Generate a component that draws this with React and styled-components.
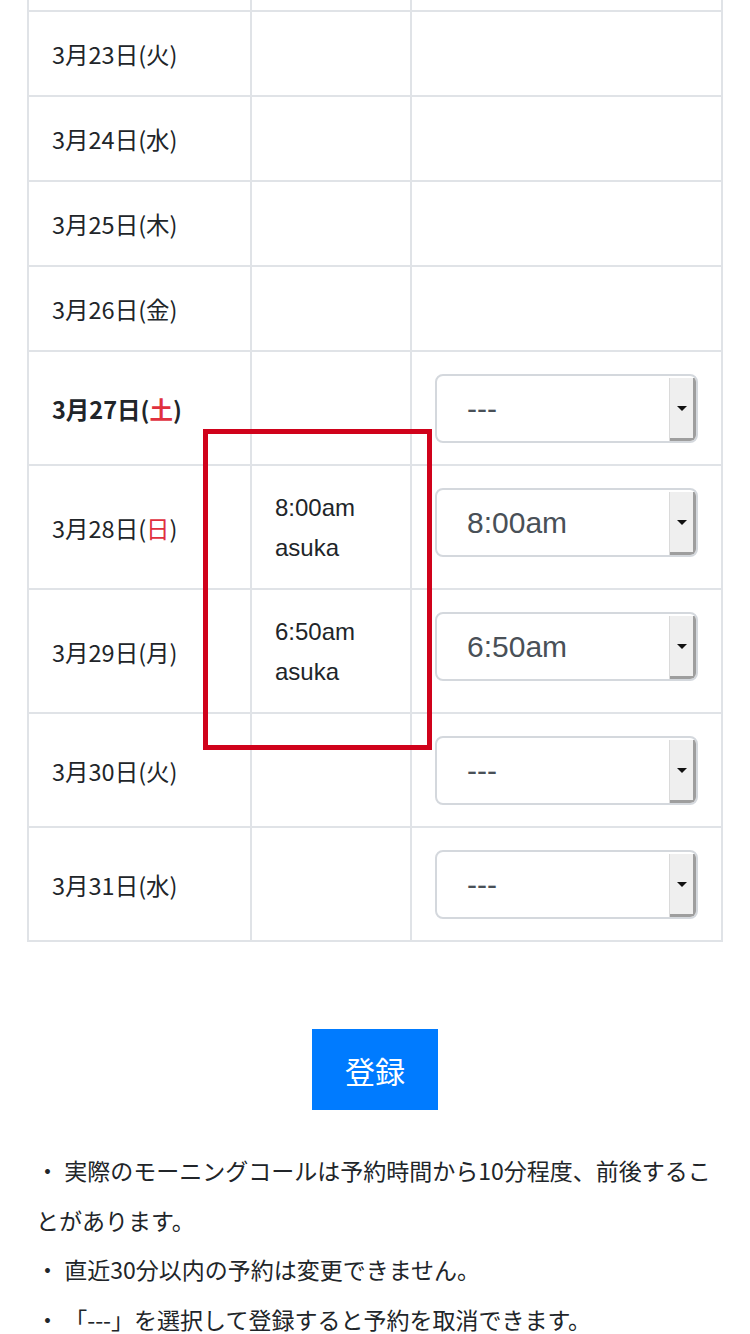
import React from "react";
import styled, { createGlobalStyle } from "styled-components";

const Global = createGlobalStyle`
  html, body { margin: 0; padding: 0; background: #fff; }
  body { font-family: "Noto Sans CJK JP", sans-serif; color: #212529; }
`;

const Page = styled.div`
  position: relative;
  display: flow-root;
  width: 750px;
  min-height: 1334px;
  overflow: hidden;
`;

const Table = styled.table`
  width: 696px;
  margin: -75px auto 0;
  border-collapse: collapse;
  table-layout: fixed;
`;

const Cell = styled.td`
  border: 2px solid #e0e3e7;
  padding: 22px 23px 21px;
  vertical-align: ${(p) => (p.$top ? "top" : "middle")};
  font-family: "Noto Sans CJK JP", sans-serif;
  font-size: 23.5px;
  line-height: 40px;
  color: #212529;
`;

const DateText = styled.span`
  font-weight: ${(p) => (p.$bold ? 700 : 400)};
`;

const Red = styled.span`
  color: #e0303e;
`;

const TimeText = styled.div`
  font-family: "Liberation Sans", "Noto Sans CJK JP", sans-serif;
  font-size: 24px;
  line-height: 39.5px;
  color: #212529;
`;

const SelectBox = styled.div`
  display: flex;
  height: 69px;
  box-sizing: border-box;
  border: 2px solid #d4d8dd;
  border-radius: 8px;
  overflow: hidden;
  background: #fff;
`;

const NativeSelect = styled.select`
  appearance: none;
  -webkit-appearance: none;
  flex: 1;
  min-width: 0;
  border: none;
  outline: none;
  background: transparent;
  padding: 0 0 0 30px;
  font-family: "Liberation Sans", sans-serif;
  font-size: 30px;
  color: #495057;
`;

const ArrowBox = styled.span`
  display: flex;
  align-items: center;
  justify-content: center;
  width: 27px;
  margin-top: 2px;
  background: #efefef;
  border-left: 1px solid #dadada;
  box-shadow: inset -3px -3px 0 #9e9e9e;
  padding: 0 3px 3px 0;
  box-sizing: border-box;
`;

const Triangle = styled.span`
  width: 0;
  height: 0;
  border-left: 5px solid transparent;
  border-right: 5px solid transparent;
  border-top: 5px solid #111;
`;

const Highlight = styled.div`
  position: absolute;
  left: 203px;
  top: 429px;
  width: 229px;
  height: 321px;
  box-sizing: border-box;
  border: 5px solid #d0021b;
  pointer-events: none;
`;

const ButtonRow = styled.div`
  display: flex;
  justify-content: center;
  margin-top: 87px;
`;

const SubmitButton = styled.button`
  width: 126px;
  height: 81px;
  border: none;
  border-radius: 0;
  background: #007bff;
  color: #fff;
  font-family: "Noto Sans CJK JP", sans-serif;
  font-size: 30px;
  padding: 0;
`;

const Notes = styled.div`
  width: 678px;
  margin: 36px auto 0;
  font-family: "Noto Sans CJK JP", sans-serif;
  font-size: 23px;
  line-height: 49.7px;
  color: #212529;
`;

const Note = styled.p`
  margin: 0;
`;

const times = ["---", "6:00am", "6:10am", "6:20am", "6:30am", "6:40am", "6:50am", "7:00am", "7:30am", "8:00am", "8:30am", "9:00am"];

function TimeSelect({ value }) {
  return (
    <SelectBox>
      <NativeSelect defaultValue={value}>
        {times.map((t) => (
          <option key={t} value={t}>{t}</option>
        ))}
      </NativeSelect>
      <ArrowBox>
        <Triangle />
      </ArrowBox>
    </SelectBox>
  );
}

/* first entry is the row scrolled out of view above the screen */
const rows = [
  { d: null },
  { d: "3月23日", w: "火" },
  { d: "3月24日", w: "水" },
  { d: "3月25日", w: "木" },
  { d: "3月26日", w: "金" },
  { d: "3月27日", w: "土", red: true, bold: true, sel: "---" },
  { d: "3月28日", w: "日", red: true, time: "8:00am", who: "asuka", sel: "8:00am" },
  { d: "3月29日", w: "月", time: "6:50am", who: "asuka", sel: "6:50am" },
  { d: "3月30日", w: "火", sel: "---" },
  { d: "3月31日", w: "水", sel: "---" },
];

export default function App() {
  return (
    <Page>
      <Global />
      <Table>
        <colgroup>
          <col style={{ width: "223px" }} />
          <col style={{ width: "160px" }} />
          <col style={{ width: "311px" }} />
        </colgroup>
        <tbody>
          {rows.map((r, i) => (
            <tr key={i}>
              <Cell>
                {r.d ? (
                  <DateText $bold={r.bold}>
                    {r.d}(
                    {r.red ? <Red>{r.w}</Red> : r.w})
                  </DateText>
                ) : (
                  "\u00a0"
                )}
              </Cell>
              <Cell $top>
                {r.time && (
                  <>
                    <TimeText>{r.time}</TimeText>
                    <TimeText>{r.who}</TimeText>
                  </>
                )}
              </Cell>
              <Cell $top>{r.sel && <TimeSelect value={r.sel} />}</Cell>
            </tr>
          ))}
        </tbody>
      </Table>
      <ButtonRow>
        <SubmitButton type="button">登録</SubmitButton>
      </ButtonRow>
      <Notes>
        <Note>・ 実際のモーニングコールは予約時間から10分程度、前後することがあります。</Note>
        <Note>・ 直近30分以内の予約は変更できません。</Note>
        <Note>・ 「---」を選択して登録すると予約を取消できます。</Note>
      </Notes>
      <Highlight />
    </Page>
  );
}
